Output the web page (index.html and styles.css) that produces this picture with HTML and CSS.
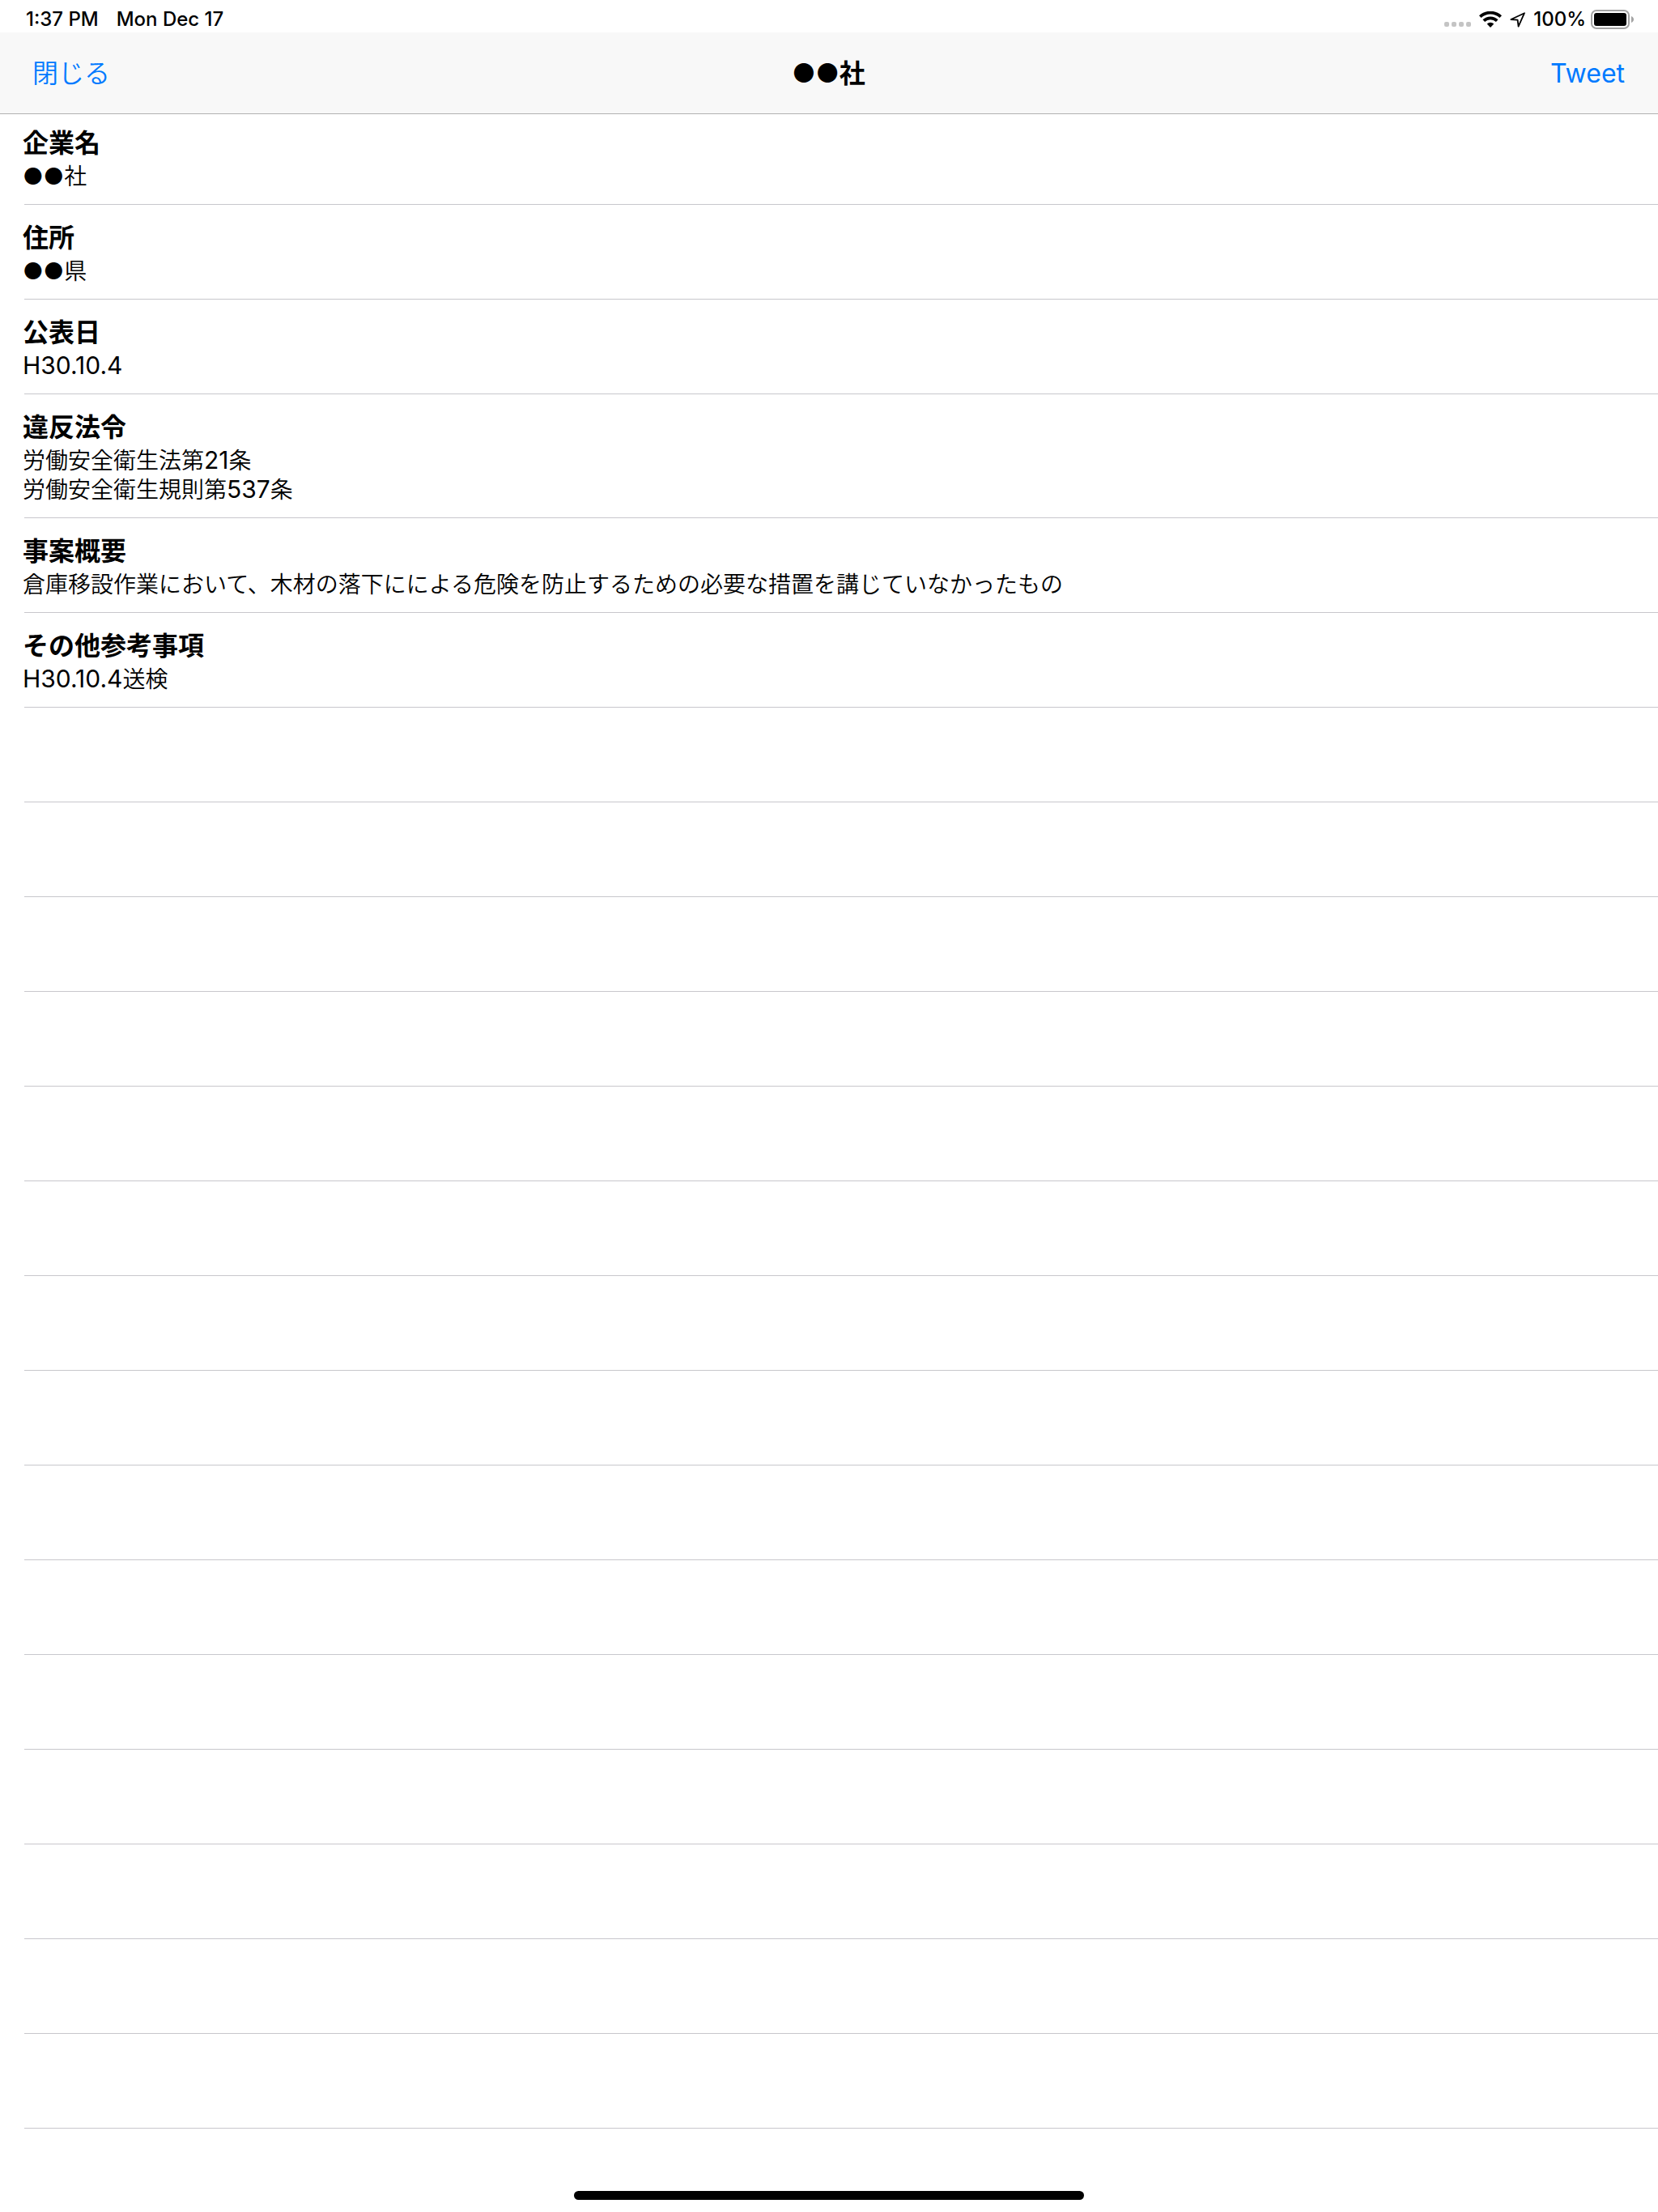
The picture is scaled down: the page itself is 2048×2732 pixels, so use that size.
FILE: index.html
```html
<!DOCTYPE html>
<html lang="ja">
<head>
<meta charset="utf-8">
<meta name="viewport" content="width=device-width, initial-scale=1">
<title>●●社</title>
<link rel="stylesheet" href="styles.css">
</head>
<body>
<div class="status" lang="en">
  <span>1:37 PM</span>
  <span class="status-date">Mon Dec 17</span>
  <span class="status-icons">
    <svg class="icon-signal" width="33" height="20" viewBox="0 0 33 20" aria-hidden="true">
      <g fill="#c4c4c4"><rect y="13" width="6" height="6" rx="2"/><rect x="9" y="13" width="6" height="6" rx="2"/><rect x="18" y="13" width="6" height="6" rx="2"/><rect x="27" y="13" width="6" height="6" rx="2"/></g>
    </svg>
    <svg class="icon-wifi" width="28" height="20" viewBox="0 0 28 20" aria-hidden="true">
      <path fill="none" stroke="#000" stroke-width="3.8" d="M1.3 6.700a18.500 18.500 0 0 1 25.400 0M5.800 11.600a11.800 11.800 0 0 1 16.400 0"/>
      <path d="M14 20l-4.300-4.400a6.200 6.200 0 0 1 8.600 0z"/>
    </svg>
    <svg class="icon-location" width="20" height="20" viewBox="0 0 20 20" aria-hidden="true">
      <path fill="none" stroke="#000" stroke-width="1.8" stroke-linejoin="round" d="M1.400 10L18 2.200 10.600 18.600 9.600 10.600z"/>
    </svg>
    <span class="status-level">100%</span>
    <svg width="53" height="24" viewBox="0 0 53 24" aria-hidden="true">
      <rect x="1" y="1" width="46" height="22" rx="6" fill="none" stroke="#a3a3a3" stroke-width="2"/>
      <rect x="4" y="4" width="40" height="16" rx="3"/>
      <path fill="#a3a3a3" d="M50 8c4 1.500 4 6.500 0 8z"/>
    </svg>
  </span>
</div>
<header class="nav">
  <button class="nav-button" type="button">閉じる</button>
  <h1 class="nav-title">●●社</h1>
  <button class="nav-button nav-end" type="button">Tweet</button>
</header>
<main>
  <dl class="details">
    <div class="row"><dt>企業名</dt><dd>●●社</dd></div>
    <div class="row"><dt>住所</dt><dd>●●県</dd></div>
    <div class="row"><dt>公表日</dt><dd><span class="latin">H30.10.4</span></dd></div>
    <div class="row"><dt>違反法令</dt><dd>労働安全衛生法第<span class="latin">21</span>条<br>労働安全衛生規則第<span class="latin">537</span>条</dd></div>
    <div class="row"><dt>事案概要</dt><dd>倉庫移設作業において、木材の落下にによる危険を防止するための必要な措置を講じていなかったもの</dd></div>
    <div class="row"><dt>その他参考事項</dt><dd><span class="latin">H30.10.4</span>送検</dd></div>
  </dl>
  <div class="blank-rows" aria-hidden="true">
    <div class="row"></div><div class="row"></div><div class="row"></div>
    <div class="row"></div><div class="row"></div><div class="row"></div>
    <div class="row"></div><div class="row"></div><div class="row"></div>
    <div class="row"></div><div class="row"></div><div class="row"></div>
    <div class="row"></div><div class="row"></div><div class="row"></div>
  </div>
</main>
<div class="home-indicator"></div>
</body>
</html>
```
FILE: styles.css
```css
* {
  box-sizing: border-box;
}

body {
  margin: 0;
  background: #fff;
  color: #000;
  font-family: Inter, "Noto Sans CJK JP", sans-serif;
  font-size: 28px;
  font-weight: 350;
  line-height: 36px;
}

.status {
  display: flex;
  align-items: center;
  height: 40px;
  padding: 8px 30px 0 32px;
  font-size: 24px;
  font-weight: 500;
  line-height: 32px;
}

.status-date {
  margin-left: 22px;
}

.status-icons {
  display: flex;
  align-items: center;
  margin-left: auto;
}

.icon-signal {
  margin-right: 10px;
}

.icon-wifi {
  margin-right: 10px;
}

.icon-location {
  margin-right: 9px;
}

.status-level {
  margin-right: 6px;
}

.nav {
  display: grid;
  grid-template-columns: 1fr auto 1fr;
  align-items: center;
  min-height: 101px;
  padding: 2px 41px 0 40px;
  border-bottom: 1px solid #b2b2b2;
  background: #f8f8f8;
}

.nav-button {
  justify-self: start;
  padding: 0;
  border: 0;
  background: none;
  color: #007aff;
  font: inherit;
  font-size: 32px;
  line-height: 40px;
}

.nav-end {
  justify-self: end;
  font-weight: 400;
}

.nav-title {
  margin: 0;
  font-size: 32px;
  font-weight: 600;
  line-height: 40px;
}

.details {
  margin: -5px 0 0;
}

.row {
  min-height: 117px;
  margin-left: 30px;
  padding: 21px 0 16px;
  border-bottom: 1px solid #c8c7cc;
}

.row dt {
  margin: 0 0 3px -2px;
  font-size: 32px;
  font-weight: 600;
  line-height: 40px;
}

.row dd {
  margin: 0 0 0 -2px;
}

.latin {
  font-size: 30px;
  font-weight: 400;
  line-height: 1;
}

.home-indicator {
  position: fixed;
  bottom: 15px;
  left: 50%;
  width: 630px;
  height: 11px;
  margin-left: -315px;
  border-radius: 6px;
  background: #000;
}
```
